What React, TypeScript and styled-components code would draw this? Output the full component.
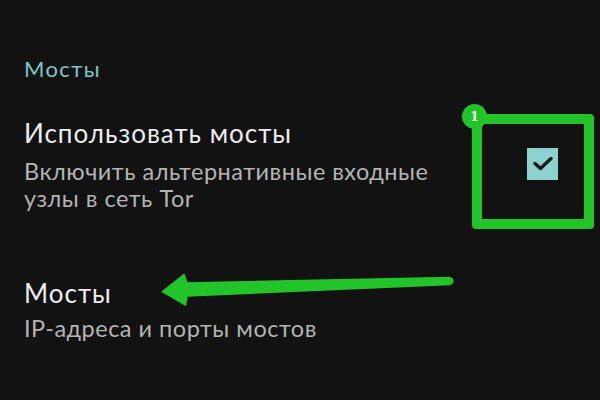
import React from "react";
import styled, { createGlobalStyle } from "styled-components";

const GlobalStyle = createGlobalStyle`
  html, body {
    margin: 0;
    padding: 0;
    background: #121212;
  }
  body {
    font-family: Lato, "Noto Sans", sans-serif;
  }
`;

const Screen = styled.div`
  position: relative;
  width: 600px;
  height: 400px;
  overflow: hidden;
  background: #121212;
  box-sizing: border-box;
  padding: 55px 24px 0 24px;
  display: flex;
  flex-direction: column;
`;

const Category = styled.div`
  font-size: 22px;
  line-height: 28px;
  letter-spacing: 1.4px;
  color: #7fc6c2;
`;

const Pref = styled.div<{ gap: number }>`
  display: flex;
  align-items: center;
  justify-content: space-between;
  margin-top: ${({ gap }) => gap}px;
`;

const PrefText = styled.div`
  display: flex;
  flex-direction: column;
`;

const PrefTitle = styled.div`
  font-size: 26px;
  line-height: 32px;
  letter-spacing: 1px;
  color: #ededed;
`;

const PrefSummary = styled.div<{ shift: number }>`
  font-size: 23.5px;
  line-height: 27px;
  letter-spacing: 0.5px;
  color: #b4b4b4;
  margin-top: ${({ shift }) => shift}px;
  max-width: 425px;
`;

const CheckBox = styled.div`
  width: 31px;
  height: 32px;
  margin-right: 18px;
  background: #8ed2cf;
  display: flex;
  align-items: center;
  justify-content: center;
`;

// annotation overlays from the screenshot markup
const HighlightFrame = styled.div`
  position: absolute;
  left: 472px;
  top: 114px;
  width: 122px;
  height: 115px;
  box-sizing: border-box;
  border: 10.5px solid #22c42a;
  border-radius: 4px;
`;

const Badge = styled.div`
  position: absolute;
  left: 462px;
  top: 104px;
  width: 25px;
  height: 25px;
  border-radius: 50%;
  background: #22c42a;
  color: #f4fff4;
  font-family: "DejaVu Serif", "Liberation Serif", serif;
  font-weight: bold;
  font-size: 12px;
  display: flex;
  align-items: center;
  justify-content: center;
`;

const ArrowLayer = styled.svg`
  position: absolute;
  left: 0;
  top: 0;
  pointer-events: none;
`;

export default function App() {
  return (
    <>
      <GlobalStyle />
      <Screen>
        <Category>Мосты</Category>
        <Pref gap={34}>
          <PrefText>
            <PrefTitle>Использовать мосты</PrefTitle>
            <PrefSummary shift={8.5}>
              Включить альтернативные входные узлы в сеть Tor
            </PrefSummary>
          </PrefText>
          <CheckBox>
            <svg width="20" height="14" viewBox="0 0 20 14">
              <path
                d="M2 6.5 L7.5 11.5 L18 1.5"
                fill="none"
                stroke="#1b1b1b"
                strokeWidth="3.4"
                strokeLinecap="round"
                strokeLinejoin="round"
              />
            </svg>
          </CheckBox>
        </Pref>
        <Pref gap={65.5}>
          <PrefText>
            <PrefTitle>Мосты</PrefTitle>
            <PrefSummary shift={6.4}>IP-адреса и порты мостов</PrefSummary>
          </PrefText>
        </Pref>

        <HighlightFrame />
        <Badge>1</Badge>
        <ArrowLayer width="600" height="400" viewBox="0 0 600 400">
          <path
            d="M450 277.5 L187 283 L184 274.5 L162.5 291.5 L185.5 305 L187 296 L450 284.5 Z"
            fill="#22c42a"
            stroke="#22c42a"
            strokeWidth="1.5"
            strokeLinejoin="round"
          />
          <circle cx="450" cy="281" r="3.5" fill="#22c42a" />
        </ArrowLayer>
      </Screen>
    </>
  );
}
